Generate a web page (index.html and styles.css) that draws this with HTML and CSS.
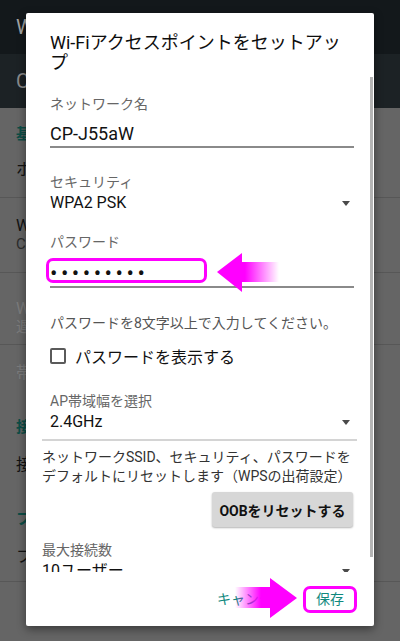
FILE: index.html
```html
<!DOCTYPE html>
<html lang="ja">
    <head>
        <meta charset="utf-8">
        <meta name="viewport" content="width=device-width, initial-scale=1">
        <title>Wi-Fiテザリング</title>
        <link rel="stylesheet" href="styles.css">
    </head>
    <body>

        <div class="app">
            <div class="app-bar">Wi-Fiテザリング</div>
            <div class="app-sub">CP-J55aW</div>
            <div class="pref-list">
                <div class="pref pref-basic">
                    <p class="pref-cat">基本設定</p>
                    <p class="pref-title pref-title-spaced">ホットスポット</p>
                </div>
                <div class="pref pref-ssid">
                    <p class="pref-title">Wi-Fiアクセスポイントをセットアップ</p>
                    <p class="pref-sub">CP-J55aW WPA2 PSK</p>
                </div>
                <div class="pref pref-wps">
                    <p class="pref-title is-off">WPSプッシュボタン</p>
                    <p class="pref-sub is-off">遅延して開始します</p>
                </div>
                <div class="pref pref-rest">
                    <p class="pref-title is-off">帯域幅</p>
                    <p class="pref-cat pref-cat-spaced">接続</p>
                    <p class="pref-title pref-title-next">接続ユーザー</p>
                    <p class="pref-cat pref-cat-spaced">フィルター</p>
                    <p class="pref-title pref-title-next">フィルタリング</p>
                </div>
            </div>
        </div>

        <div class="dialog">
            <h1 class="dialog-title">Wi-Fiアクセスポイントをセットアップ</h1>

            <div class="dialog-body">
                <div class="field field-name">
                    <p class="field-label">ネットワーク名</p>
                    <p class="field-input input-name">CP-J55aW</p>
                </div>

                <div class="field field-security">
                    <p class="field-label">セキュリティ</p>
                    <div class="field-select"><span>WPA2 PSK</span><i class="caret"></i></div>
                </div>

                <div class="field field-password">
                    <p class="field-label">パスワード</p>
                    <div class="field-input input-password">
                        <span class="dots">•••••••••</span>
                        <div class="mark-box"></div>
                        <svg class="arrow-left" width="66" height="42" viewBox="0 0 66 42">
                            <defs>
                                <linearGradient id="fadeLeft" x1="0" y1="0" x2="1" y2="0">
                                    <stop offset="0" stop-color="#ff00ff"/>
                                    <stop offset="0.45" stop-color="#ff00ff"/>
                                    <stop offset="1" stop-color="#ff00ff" stop-opacity="0"/>
                                </linearGradient>
                            </defs>
                            <path d="M2 20 L27 1 L27 10 L64 10 L64 30 L27 30 L27 40 Z" fill="url(#fadeLeft)"/>
                        </svg>
                    </div>
                </div>

                <p class="hint">パスワードを8文字以上で入力してください。</p>

                <label class="check-row">
                    <span class="check-box"></span>
                    <span>パスワードを表示する</span>
                </label>

                <div class="field field-band">
                    <p class="field-label">AP帯域幅を選択</p>
                    <div class="field-select"><span>2.4GHz</span><i class="caret"></i></div>
                </div>

                <div class="divider"></div>

                <p class="reset-text">ネットワークSSID、セキュリティ、パスワードをデフォルトにリセットします（WPSの出荷設定）</p>

                <div class="reset-row">
                    <button class="reset-button" type="button">OOBをリセットする</button>
                </div>

                <div class="field field-max">
                    <p class="field-label">最大接続数</p>
                    <div class="field-select"><span>10ユーザー</span><i class="caret"></i></div>
                </div>

                <div class="scroll-thumb"></div>
            </div>

            <div class="dialog-actions">
                <span class="action">キャンセル</span>
                <span class="action is-marked">保存</span>
                <svg class="arrow-right" width="66" height="42" viewBox="0 0 66 42">
                    <defs>
                        <linearGradient id="fadeRight" x1="0" y1="0" x2="1" y2="0">
                            <stop offset="0" stop-color="#ff00ff" stop-opacity="0"/>
                            <stop offset="0.42" stop-color="#ff00ff"/>
                            <stop offset="1" stop-color="#ff00ff"/>
                        </linearGradient>
                    </defs>
                    <path d="M2 10 L37 10 L37 1 L64 21 L37 41 L37 31 L2 31 Z" fill="url(#fadeRight)"/>
                </svg>
            </div>
        </div>

    </body>
</html>
```

FILE: styles.css
```css
* {
    margin: 0;
    padding: 0;
    box-sizing: border-box;
}

body {
    width: 400px;
    height: 641px;
    overflow: hidden;
    position: relative;
    background: #656565;
    font-family: Roboto, "Noto Sans CJK JP", sans-serif;
    color: #111111;
}

/* background app, dimmed by the dialog */

.app-bar,
.app-sub {
    height: 54px;
    line-height: 54px;
    padding-left: 16px;
    font-size: 20px;
    white-space: nowrap;
}
.app-bar {
    background: #13181b;
    color: #a4a4a4;
}
.app-sub {
    background: #1c2225;
    color: #8a8a8a;
}

.pref {
    border-bottom: 1px solid #575757;
    padding: 0 16px;
    white-space: nowrap;
}
.pref-basic { height: 90px; padding-top: 16px; }
.pref-ssid  { height: 75px; padding-top: 18px; }
.pref-wps   { height: 72px; padding-top: 26px; }
.pref-rest  { height: 237px; padding-top: 18px; }

.pref-cat {
    color: #0c4d46;
    font-size: 15px;
    font-weight: bold;
    line-height: 20px;
}
.pref-cat-spaced { margin-top: 34px; }

.pref-title {
    font-size: 16px;
    line-height: 20px;
    color: #121212;
}
.pref-title-spaced { margin-top: 16px; }
.pref-title-next { margin-top: 18px; }

.pref-sub {
    font-size: 15px;
    line-height: 16px;
    color: #2c2c2c;
}

.is-off { color: #7c7c7c; }

/* dialog */

.dialog {
    position: absolute;
    left: 26px;
    top: 13px;
    width: 348px;
    height: 613px;
    background: #ffffff;
    border-radius: 2px;
    box-shadow: 0 3px 10px rgba(0, 0, 0, 0.45);
    display: flex;
    flex-direction: column;
}

.dialog-title {
    padding: 20px 24px 2px;
    font-size: 18px;
    line-height: 20px;
    font-weight: normal;
    color: #0d0d0d;
}

.dialog-body {
    flex: 1;
    overflow: hidden;
    position: relative;
}

.scroll-thumb {
    position: absolute;
    right: 1px;
    top: 2px;
    width: 3px;
    height: 480px;
    background: #b4b4b4;
}

.field {
    padding: 0 20px 0 24px;
}
.field-name     { margin-top: 19px; }
.field-security { margin-top: 24px; }
.field-password { margin-top: 18px; }
.field-band     { margin-top: 23px; }
.field-max      { margin-top: 13px; padding-left: 16px; }

.field-label {
    font-size: 14px;
    line-height: 20px;
    color: #666666;
}

.field-input {
    border-bottom: 2px solid #8a8a8a;
    height: 26px;
}
.input-name {
    margin-top: 8px;
    font-size: 18px;
    line-height: 24px;
}
.input-password {
    margin-top: 10px;
    position: relative;
    font-size: 16px;
    line-height: 24px;
}

.dots {
    font-size: 22px;
    letter-spacing: 3.5px;
}

.field-select {
    display: flex;
    justify-content: space-between;
    align-items: center;
    font-size: 16px;
    line-height: 22px;
}

.caret {
    width: 0;
    height: 0;
    margin-right: 4px;
    border-left: 4px solid transparent;
    border-right: 4px solid transparent;
    border-top: 5px solid #4a4a4a;
}

/* annotations */

.mark-box {
    position: absolute;
    left: -4px;
    top: -4px;
    width: 161px;
    height: 25px;
    border: 3px solid #ff00ff;
    border-radius: 7px;
}
.arrow-left {
    position: absolute;
    left: 165px;
    top: -10px;
}

.hint {
    margin-top: 25px;
    padding-left: 24px;
    font-size: 14px;
    line-height: 20px;
    color: #555555;
}

.check-row {
    margin-top: 11px;
    padding-left: 24px;
    height: 24px;
    display: flex;
    align-items: center;
    gap: 9px;
    font-size: 16px;
    color: #111111;
}
.check-box {
    width: 16px;
    height: 16px;
    border: 2px solid #5a5a5a;
    border-radius: 2px;
}

.divider {
    margin: 6px 17px 0 16px;
    height: 2px;
    background: #d4d4d4;
}

.reset-text {
    margin-top: 7px;
    padding: 0 17px 0 16px;
    font-size: 14px;
    line-height: 19px;
    color: #333333;
}

.reset-row {
    margin-top: 6px;
    padding-right: 21px;
    display: flex;
    justify-content: flex-end;
}
.reset-button {
    width: 141px;
    height: 35px;
    border: none;
    border-radius: 3px;
    background: #d7d7d7;
    box-shadow: 0 1px 2px rgba(0, 0, 0, 0.3);
    font-family: Roboto, "Noto Sans CJK JP", sans-serif;
    font-size: 14px;
    font-weight: bold;
    color: #111111;
}

.dialog-actions {
    height: 54px;
    position: relative;
    display: flex;
    justify-content: flex-end;
    align-items: center;
    gap: 8px;
    padding-right: 17px;
}

.action {
    padding: 0 8px;
    font-size: 14px;
    line-height: 21px;
    color: #10897e;
}
.action.is-marked {
    height: 27px;
    padding: 0 10px;
    border: 3px solid #ff00ff;
    border-radius: 7px;
}

.arrow-right {
    position: absolute;
    left: 207px;
    top: 5px;
}
```
